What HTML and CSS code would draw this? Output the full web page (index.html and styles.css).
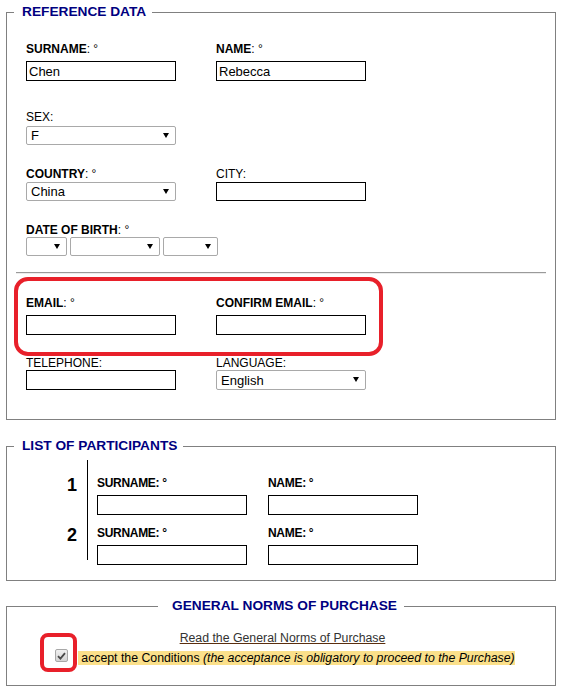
FILE: index.html
```html
<!DOCTYPE html>
<html lang="en">
<head>
<meta charset="utf-8">
<title>Reference data</title>
<link rel="stylesheet" href="styles.css">
</head>
<body>
<div class="page">
  <fieldset class="fs fs-ref">
    <legend class="lg">REFERENCE DATA</legend>
    <div class="grid row r1 g5">
      <div class="f"><label class="lb"><b>SURNAME</b>: °</label><input class="txt" type="text" value="Chen"></div>
      <div class="f"><label class="lb"><b>NAME</b>: °</label><input class="txt" type="text" value="Rebecca"></div>
    </div>
    <div class="grid row r2 g2">
      <div class="f"><label class="lb">SEX:</label><span class="sel"><select><option>F</option></select></span></div>
    </div>
    <div class="grid row r3 g1">
      <div class="f"><label class="lb"><b>COUNTRY</b>: °</label><span class="sel"><select><option>China</option></select></span></div>
      <div class="f"><label class="lb">CITY:</label><input class="txt short" type="text"></div>
    </div>
    <div class="grid row r4 g0">
      <div class="f wide"><label class="lb"><b>DATE OF BIRTH</b>: °</label>
        <div class="dob">
          <span class="sel d1"><select><option></option></select></span>
          <span class="sel d2"><select><option></option></select></span>
          <span class="sel d3"><select><option></option></select></span>
        </div>
      </div>
    </div>
    <hr class="sep">
    <div class="grid row r5 g5">
      <div class="f"><label class="lb"><b>EMAIL</b>: °</label><input class="txt" type="text"></div>
      <div class="f"><label class="lb"><b>CONFIRM EMAIL</b>: °</label><input class="txt" type="text"></div>
    </div>
    <div class="grid row r6 g0">
      <div class="f"><label class="lb">TELEPHONE:</label><input class="txt" type="text"></div>
      <div class="f"><label class="lb">LANGUAGE:</label><span class="sel tall"><select><option>English</option></select></span></div>
    </div>
  </fieldset>

  <fieldset class="fs fs-part">
    <legend class="lg">LIST OF PARTICIPANTS</legend>
    <div class="plist">
      <div class="pnums">
        <div class="pn">1</div>
        <div class="pn">2</div>
      </div>
      <div class="prows">
        <div class="prow">
          <div class="f"><label class="lb pl">SURNAME: °</label><input class="txt" type="text"></div>
          <div class="f"><label class="lb pl">NAME: °</label><input class="txt" type="text"></div>
        </div>
        <div class="prow">
          <div class="f"><label class="lb pl">SURNAME: °</label><input class="txt" type="text"></div>
          <div class="f"><label class="lb pl">NAME: °</label><input class="txt" type="text"></div>
        </div>
      </div>
    </div>
  </fieldset>

  <fieldset class="fs fs-norms">
    <legend class="lg lg-c">GENERAL NORMS OF PURCHASE</legend>
    <div class="norms">
      <div class="read"><a href="#" class="link">Read the General Norms of Purchase</a></div>
      <div class="accept">
        <span class="cb"><svg width="9" height="8" viewBox="0 0 9 8"><path d="M1 4.2 L3.4 6.6 L8 1.2" fill="none" stroke="#4a4a4a" stroke-width="1.8"/></svg></span><span class="hl">accept the Conditions <i>(the acceptance is obligatory to proceed to the Purchase)</i></span>
      </div>
    </div>
  </fieldset>

  <div class="mark mark-email"></div>
  <div class="mark mark-check"></div>
</div>
</body>
</html>
```

FILE: styles.css
```css
body {
  margin: 0;
  background: #fff;
  color: #000;
  font-family: "Liberation Sans", Arial, sans-serif;
  font-size: 12px;
}

.page {
  position: relative;
  width: 550px;
  padding: 4px 6px 0;
}

.fs {
  margin: 0;
  padding: 0;
  border: 1px solid #808080;
  min-width: 0;
}

.lg {
  font-size: 13.7px;
  font-weight: bold;
  line-height: 16px;
  color: #000080;
  margin-left: 7px;
  padding: 0 6px 0 8px;
}

.lg-c {
  margin: 0 auto;
  padding: 0 7px 0 14px;
}

/* reference data */
.fs-ref {
  padding-bottom: 29px;
}

.grid {
  display: grid;
  grid-template-columns: 150px 150px;
  column-gap: 40px;
  margin-left: 19px;
}

.r1 { margin-top: 22px; }
.r2 { margin-top: 29px; }
.r3 { margin-top: 22px; }
.r4 { margin-top: 22px; }
.r5 { margin-top: 22px; }
.r6 { margin-top: 21px; }

.wide { grid-column: 1 / 3; }

.lb {
  display: block;
  font-size: 12px;
  line-height: 14px;
  white-space: nowrap;
}

.g5 .lb { margin-bottom: 5px; }
.g2 .lb { margin-bottom: 2px; }
.g1 .lb { margin-bottom: 1px; }
.g0 .lb { margin-bottom: 0; }

.txt {
  display: block;
  box-sizing: border-box;
  width: 150px;
  height: 20px;
  margin: 0;
  padding: 0 2px;
  border: 1px solid #000;
  border-radius: 0;
  background: #fff;
  font-family: "Liberation Sans", Arial, sans-serif;
  font-size: 13px;
  color: #000;
  outline: none;
}

.txt.short { height: 19px; }

.sel {
  position: relative;
  display: block;
  width: 150px;
  height: 19px;
}

.sel.tall { height: 20px; }

.sel select {
  -webkit-appearance: none;
  appearance: none;
  box-sizing: border-box;
  width: 100%;
  height: 100%;
  margin: 0;
  padding: 0 0 0 4px;
  border: 1px solid #a9a9a9;
  border-radius: 2px;
  background: #fff;
  font-family: "Liberation Sans", Arial, sans-serif;
  font-size: 13px;
  color: #000;
}

.sel::after {
  content: "";
  position: absolute;
  right: 7px;
  top: 7px;
  width: 0;
  height: 0;
  border-left: 3px solid transparent;
  border-right: 3px solid transparent;
  border-top: 5px solid #000;
  pointer-events: none;
}

.dob {
  display: flex;
  gap: 3px;
}

.sel.d1 { width: 41px; }
.sel.d2 { width: 90px; }
.sel.d3 { width: 55px; }

.sep {
  height: 0;
  margin: 16px 9px 0 9px;
  border: 0;
  border-top: 1px solid #9a9a9a;
  border-bottom: 1px solid #ececec;
}

/* participants */
.fs-part {
  margin-top: 18px;
  padding-bottom: 15px;
}

.plist {
  display: flex;
  align-items: flex-start;
  margin-top: 6px;
}

.pnums {
  box-sizing: border-box;
  width: 81px;
  height: 100px;
  padding: 15px 10px 0 0;
  border-right: 1px solid #000;
  text-align: right;
  font-size: 18px;
  font-weight: bold;
  line-height: 20px;
}

.pn + .pn { margin-top: 30px; }

.prows {
  margin-left: 9px;
  padding-top: 16px;
}

.prow {
  display: grid;
  grid-template-columns: 150px 150px;
  column-gap: 21px;
}

.prow + .prow { margin-top: 11px; }

.prow .lb { margin-bottom: 5px; }

.lb.pl {
  font-weight: bold;
  letter-spacing: -0.3px;
}

/* norms */
.fs-norms {
  margin-top: 17px;
  padding-bottom: 19px;
}

.norms {
  text-align: center;
  font-size: 12.3px;
}

.read {
  margin-top: 17px;
  padding-left: 3px;
  line-height: 15px;
}

.link {
  color: #333;
  text-decoration: underline;
  text-decoration-color: #5a2e0e;
}

.accept {
  margin-top: 3px;
  line-height: 15px;
  padding-left: 8px;
}

.cb {
  display: inline-block;
  overflow: hidden;
  box-sizing: border-box;
  width: 13px;
  height: 13px;
  margin-right: 10px;
  padding: 2px 0 0 1px;
  border: 1px solid #a8a8a8;
  border-radius: 2px;
  background: linear-gradient(#f0f0f0, #d4d4d4);
  vertical-align: baseline;
}

.cb svg { display: block; }

.hl {
  background: #fbe08a;
  padding-left: 3px;
  color: #000;
}

/* annotation marks */
.mark {
  position: absolute;
  border: 4px solid #e8202a;
  pointer-events: none;
}

.mark-email {
  left: 14px;
  top: 277px;
  width: 361px;
  height: 71px;
  border-radius: 14px;
}

.mark-check {
  left: 40px;
  top: 633px;
  width: 29px;
  height: 31px;
  border-radius: 8px;
}
```
